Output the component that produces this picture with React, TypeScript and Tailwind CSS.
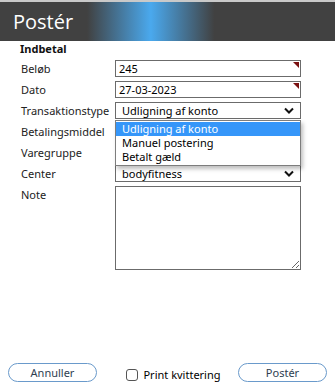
import React from 'react';

const labelFont = { fontFamily: '"Noto Sans", "DejaVu Sans", sans-serif' }

const Chevron = () => (
  <svg width="10" height="7" viewBox="0 0 10 7" className="shrink-0">
    <path d="M1 1.5 L5 5.5 L9 1.5" fill="none" stroke="#111" strokeWidth="2" />
  </svg>
)

const Corner = () => (
  <span className="absolute right-[1px] top-[1px] w-0 h-0 border-t-[6px] border-l-[6px] border-t-[#7a1010] border-l-transparent" />
)

const Row = (props: { label: string, children?: React.ReactNode }) => {
  return <div className="flex items-start mt-[4px]">
    <div className="w-[115px] shrink-0 pl-[21px] whitespace-nowrap text-[11px] leading-[17px] text-[#222]">{props.label}</div>
    <div className="w-[186px]">{props.children}</div>
  </div>
}

const Input = (props: { value: string, marker?: boolean }) => {
  return <div className="relative h-[17px] border border-[#6b6b6b] bg-white px-[3px] text-[11px] leading-[15px] text-black">
    {props.value}
    {props.marker && <Corner />}
  </div>
}

const Select = (props: { value: string }) => {
  return <div className="flex items-center justify-between h-[17px] border border-[#6b6b6b] bg-white pl-[6px] pr-[6px] text-[11px] leading-[15px] text-black">
    <span>{props.value}</span>
    <Chevron />
  </div>
}

export default function App() {
  const options = ['Udligning af konto', 'Manuel postering', 'Betalt gæld']

  return <div className="w-[335px] h-[389px] bg-white flex flex-col" style={labelFont}>
    <div className="h-[41px] shrink-0 border-t-2 border-[#c9c9c9] bg-[linear-gradient(to_right,#414141_0%,#414141_26%,#4aa9ee_45%,#414141_64%,#414141_100%)] flex items-center pl-[13px]">
      <span className="text-white text-[20px] leading-none" style={{ fontFamily: '"Open Sans", sans-serif' }}>Postér</span>
    </div>

    <div className="relative flex flex-col">
      <div className="pl-[20px] pt-[1px] text-[11px] font-bold text-[#111] leading-[14px]">Indbetal</div>
      <Row label="Beløb"><Input value="245" marker /></Row>
      <Row label="Dato"><Input value="27-03-2023" marker /></Row>
      <Row label="Transaktionstype"><Select value="Udligning af konto" /></Row>
      <Row label="Betalingsmiddel"><Select value="" /></Row>
      <Row label="Varegruppe"><Select value="" /></Row>
      <Row label="Center"><Select value="bodyfitness" /></Row>
      <Row label="Note">
        <textarea className="block w-[186px] h-[84px] border border-[#6b6b6b] bg-white resize" />
      </Row>

      <div className="absolute left-[115px] top-[79px] w-[186px] border border-[#7d7d7d] bg-white shadow-[2px_3px_4px_rgba(0,0,0,0.25)] py-[1px] text-[11px] text-black">
        {options.map((o, i) => (
          <div key={o} className={i === 0 ? 'h-[14px] leading-[14px] pl-[6px] bg-[#3596f9] text-white' : 'h-[14px] leading-[14px] pl-[6px]'}>{o}</div>
        ))}
      </div>
    </div>

    <div className="flex-1" />

    <div className="flex items-center justify-between px-[8px] pb-[6px]">
      <button className="w-[89px] h-[19px] rounded-full border-[1.5px] border-[#6a9acb] text-[11px] leading-none text-[#2e3e50] bg-white">Annuller</button>
      <label className="flex items-center gap-[5px] ml-[12px] text-[11px] text-black mt-[4px]">
        <span className="w-[12px] h-[12px] rounded-[3px] border border-[#555] bg-white" />
        Print kvittering
      </label>
      <button className="w-[89px] h-[19px] rounded-full border-[1.5px] border-[#6a9acb] text-[11px] leading-none text-[#2e3e50] bg-white">Postér</button>
    </div>
  </div>
}
